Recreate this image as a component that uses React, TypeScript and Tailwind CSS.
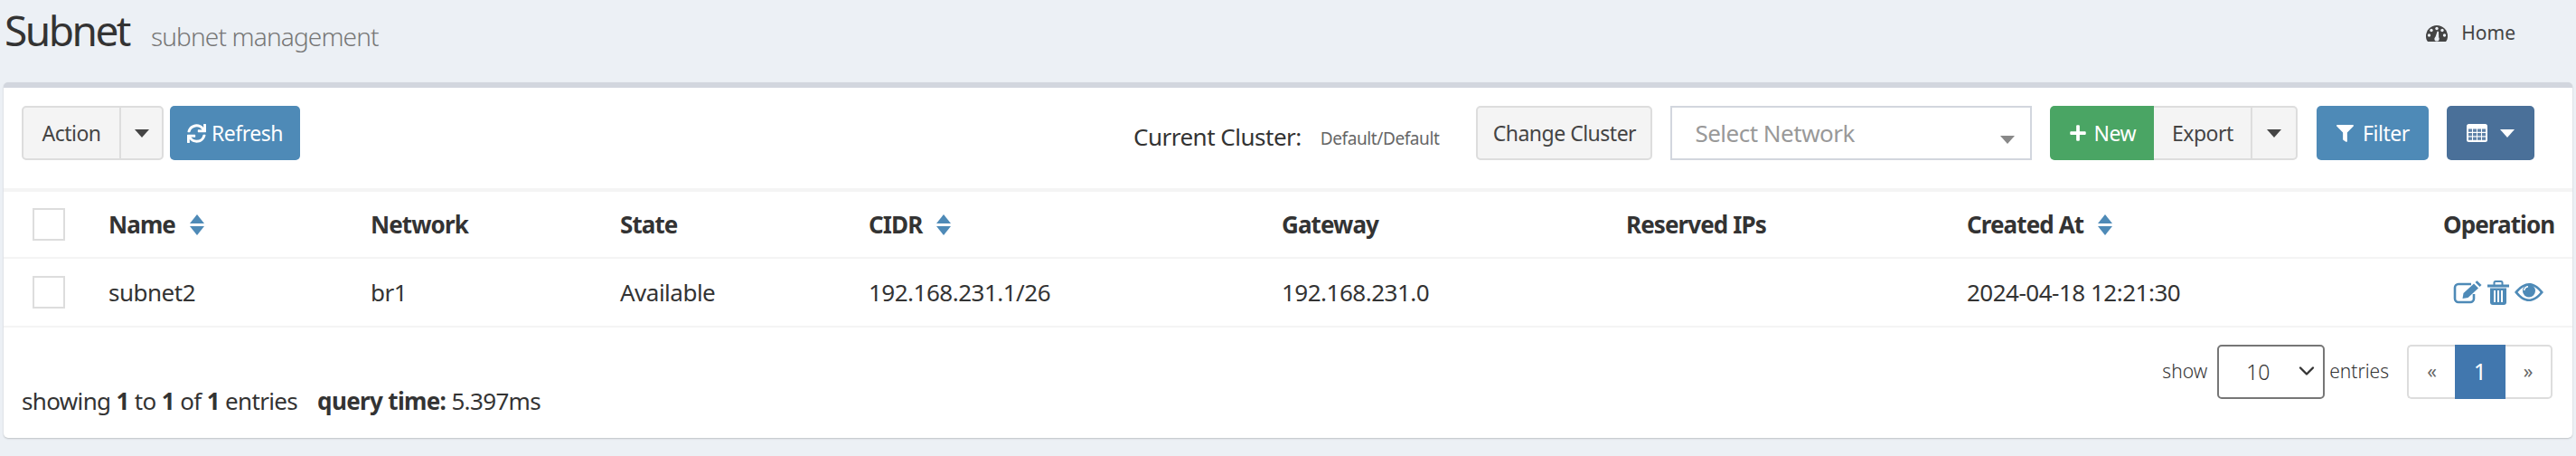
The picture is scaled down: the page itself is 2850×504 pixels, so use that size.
import { FaFilter, FaPlus, FaSync } from "react-icons/fa";
import { ChevronDown } from "lucide-react";

const columns = [
  { name: "Name", width: "w-[290px]", sort: true },
  { name: "Network", width: "w-[276px]" },
  { name: "State", width: "w-[275px]" },
  { name: "CIDR", width: "w-[457px]", sort: true },
  { name: "Gateway", width: "w-[381px]" },
  { name: "Reserved IPs", width: "w-[377px]" },
  { name: "Created At", width: "w-[527px]", sort: true },
];

const row = ["subnet2", "br1", "Available", "192.168.231.1/26", "192.168.231.0", "", "2024-04-18 12:21:30"];

function SortIcon() {
  return (
    <svg viewBox="0 0 18 23" className="ml-[15px] inline-block h-[23px] w-[18px] align-[-2px]" fill="#4e8ab7">
      <path d="M9 0 L17 10 L1 10 Z" />
      <path d="M9 23 L17 13 L1 13 Z" />
    </svg>
  );
}

function Caret({ color = "border-t-[#444]" }: { color?: string }) {
  return <span className={`inline-block h-0 w-0 border-x-[8px] border-t-[9px] border-x-transparent ${color}`} />;
}

function Checkbox() {
  return <div className="h-[36px] w-[36px] border-2 border-[#ddd] bg-white" />;
}

function DashboardIcon() {
  return (
    <svg viewBox="0 0 24 18" className="h-[18px] w-[24px]" fill="#444">
      <path d="M12 0 A12 12 0 0 0 0 12 C0 14.5 .7 16.5 2 18 H22 C23.3 16.5 24 14.5 24 12 A12 12 0 0 0 12 0Z" />
      <g fill="#ecf0f5">
        <circle cx="12" cy="3.5" r="1.7" />
        <circle cx="6" cy="5.5" r="1.7" />
        <circle cx="18" cy="5.5" r="1.7" />
        <circle cx="3.5" cy="11" r="1.7" />
        <circle cx="20.5" cy="11" r="1.7" />
        <path d="M9.8 15 L12.6 6.5 L14 6.9 L14.2 15 Z" />
        <circle cx="12" cy="15" r="2.6" />
      </g>
    </svg>
  );
}

function GridIcon() {
  const cells = [];
  for (let r = 0; r < 3; r++) {
    for (let c = 0; c < 4; c++) {
      cells.push(<rect key={`${r}-${c}`} x={2 + c * 5} y={5.5 + r * 4.5} width="4" height="3.3" />);
    }
  }
  return (
    <svg viewBox="0 0 23 20" className="h-[20px] w-[23px]">
      <rect width="23" height="20" rx="2.5" fill="#fff" />
      <g fill="#5f82a8">{cells}</g>
    </svg>
  );
}

function EditIcon() {
  return (
    <svg viewBox="0 0 32 26" className="h-[26px] w-[32px]" fill="#4e8ab7">
      <path d="M20 4 H6 a4 4 0 0 0 -4 4 V20 a4 4 0 0 0 4 4 H19 a4 4 0 0 0 4 -4 V15" fill="none" stroke="#4e8ab7" strokeWidth="2.6" />
      <path d="M10.5 20 L11.5 14 L23 3.5 L28 8.5 L16.5 19 Z" />
      <path d="M24.5 2 L26.5 .3 L31.5 5 L29.5 7 Z" />
    </svg>
  );
}

function TrashIcon() {
  return (
    <svg viewBox="0 0 24 27" className="h-[27px] w-[24px]" fill="#4e8ab7">
      <path d="M7.5 5 V2.5 a1.5 1.5 0 0 1 1.5 -1.5 h6 a1.5 1.5 0 0 1 1.5 1.5 V5" fill="none" stroke="#4e8ab7" strokeWidth="2" />
      <rect x="0" y="4.5" width="24" height="3" />
      <path d="M3 8.5 H21 V24 a3 3 0 0 1 -3 3 H6 a3 3 0 0 1 -3 -3 Z" />
      <g fill="#fff">
        <rect x="7" y="11" width="2" height="13" />
        <rect x="11" y="11" width="2" height="13" />
        <rect x="15" y="11" width="2" height="13" />
      </g>
    </svg>
  );
}

function EyeIcon() {
  return (
    <svg viewBox="0 0 32 20" className="h-[20px] w-[32px]" fill="#4e8ab7">
      <path
        fillRule="evenodd"
        d="M0 10 C6 2.5 11 0 16 0 S26 2.5 32 10 C26 17.5 21 20 16 20 S6 17.5 0 10 Z M3.5 10 C8 15.5 12 17.5 16 17.5 S24 15.5 28.5 10 C24 4.5 20 2.5 16 2.5 S8 4.5 3.5 10 Z"
      />
      <circle cx="16" cy="8.5" r="7" />
      <path d="M10.5 8 C11 5.5 12.5 4 15 3.7" fill="none" stroke="#fff" strokeWidth="1.4" />
    </svg>
  );
}

export default function App() {
  return (
    <div className="h-[504px] w-[2850px] overflow-hidden bg-[#ecf0f5] font-['Noto_Sans',sans-serif] text-[26px] tracking-[-0.5px] text-[#333]">
      {/* page header */}
      <div className="flex h-[91px] items-start justify-between pl-[5px] pr-[67px]">
        <div className="flex items-baseline pt-[3px]">
          <h1 className="text-[46px] leading-[60px] tracking-[-2.5px] text-[#333]">Subnet</h1>
          <span className="ml-[24px] text-[28px] font-light tracking-[-0.85px] text-[#777]">subnet management</span>
        </div>
        <div className="flex items-center gap-[15px] pt-[21px] text-[#444]">
          <DashboardIcon />
          <span className="text-[21px] tracking-normal">Home</span>
        </div>
      </div>

      {/* panel */}
      <div className="mx-[4px] h-[393px] rounded-[5px] border-t-[6px] border-[#d2d6de] bg-white shadow-[0_1px_2px_rgba(0,0,0,0.2)]">
        {/* toolbar */}
        <div className="flex h-[111px] items-start px-[20px] pt-[20px] text-[23px]">
          <div className="flex h-[60px] rounded-[5px] border-2 border-[#ddd] bg-[#f4f4f4] text-[#444]">
            <div className="flex w-[108px] items-center justify-center border-r-2 border-[#ddd]">Action</div>
            <div className="flex w-[45px] items-center justify-center"><Caret /></div>
          </div>
          <div className="ml-[7px] flex h-[60px] w-[144px] items-center justify-center gap-[6px] rounded-[5px] bg-[#4e8ab7] text-white">
            <FaSync className="h-[21px] w-[21px]" />
            Refresh
          </div>

          <span className="ml-[922px] mt-[17px] text-[26px] leading-[34px]">Current Cluster:</span>
          <span className="ml-[21px] mt-[24px] text-[19px] leading-[24px] tracking-[-0.4px] text-[#666]">Default/Default</span>
          <div className="ml-[41px] flex h-[60px] w-[195px] items-center justify-center rounded-[5px] border-2 border-[#ddd] bg-[#f4f4f4] text-[#444]">
            Change Cluster
          </div>
          <div className="ml-[20px] flex h-[60px] w-[400px] items-center justify-between border-2 border-[#d2d6de] bg-white pl-[25px] pr-[17px] text-[26px] text-[#999]">
            Select Network
            <span className="mt-[4px]"><Caret color="border-t-[#888]" /></span>
          </div>
          <div className="ml-[20px] flex h-[60px] w-[115px] items-center justify-center gap-[8px] rounded-l-[5px] bg-[#4aa564] text-white">
            <FaPlus className="h-[20px] w-[20px]" />
            New
          </div>
          <div className="flex h-[60px] rounded-r-[5px] border-y-2 border-r-2 border-[#ddd] bg-[#f4f4f4] text-[#444]">
            <div className="flex w-[109px] items-center justify-center border-r-2 border-[#ddd]">Export</div>
            <div className="flex w-[48px] items-center justify-center"><Caret /></div>
          </div>
          <div className="ml-[21px] flex h-[60px] w-[124px] items-center justify-center gap-[10px] rounded-[5px] bg-[#4e8ab7] text-white">
            <FaFilter className="h-[19px] w-[19px]" />
            Filter
          </div>
          <div className="ml-[20px] flex h-[60px] w-[97px] items-center justify-center gap-[14px] rounded-[5px] bg-[#4a7099] text-white">
            <GridIcon />
            <Caret color="border-t-white" />
          </div>
        </div>

        {/* table */}
        <table className="w-full table-fixed border-t-4 border-[#f4f4f4]">
          <thead>
            <tr className="h-[75px] border-b-2 border-[#f4f4f4]">
              <th className="w-[100px] pl-[32px] align-middle"><Checkbox /></th>
              {columns.map((col) => (
                <th key={col.name} className={`${col.width} pl-[16px] text-left font-bold tracking-[-0.9px] text-[#333]`}>
                  {col.name}
                  {col.sort && <SortIcon />}
                </th>
              ))}
              <th className="pl-[16px] text-left font-bold tracking-[-0.9px] text-[#333]">Operation</th>
            </tr>
          </thead>
          <tbody>
            <tr className="h-[76px] border-b-2 border-[#f4f4f4]">
              <td className="pl-[32px]"><Checkbox /></td>
              {row.map((val, i) => (
                <td key={i} className="pl-[16px]">{val}</td>
              ))}
              <td className="pl-[27px]">
                <div className="flex items-center gap-[6px]">
                  <EditIcon />
                  <TrashIcon />
                  <EyeIcon />
                </div>
              </td>
            </tr>
          </tbody>
        </table>

        {/* footer */}
        <div className="flex items-start justify-between pl-[20px] pr-[22px]">
          <div className="mt-[64px] leading-[34px] tracking-[-0.65px]">
            showing <b>1</b> to <b>1</b> of <b>1</b> entries
            <b className="ml-[22px]">query time:</b> 5.397ms
          </div>
          <div className="mt-[19px] flex h-[60px] items-center text-[21px] font-light tracking-normal">
            <span>show</span>
            <div className="relative ml-[11px] h-[60px] w-[119px]">
              <select className="h-full w-full appearance-none rounded-[5px] border-2 border-[#767676] bg-white pl-[30px] text-[23px]">
                <option>10</option>
              </select>
              <ChevronDown className="pointer-events-none absolute right-[6px] top-[15px] h-[28px] w-[28px]" strokeWidth={2} />
            </div>
            <span className="ml-[5px]">entries</span>
            <div className="ml-[20px] flex h-[60px] font-normal text-[#666]">
              <div className="flex w-[53px] items-center justify-center rounded-l-[5px] border-y-2 border-l-2 border-[#ddd]">«</div>
              <div className="flex w-[56px] items-center justify-center bg-[#4177ae] text-[25px] text-white">1</div>
              <div className="flex w-[52px] items-center justify-center rounded-r-[5px] border-y-2 border-r-2 border-[#ddd]">»</div>
            </div>
          </div>
        </div>
      </div>
    </div>
  );
}
